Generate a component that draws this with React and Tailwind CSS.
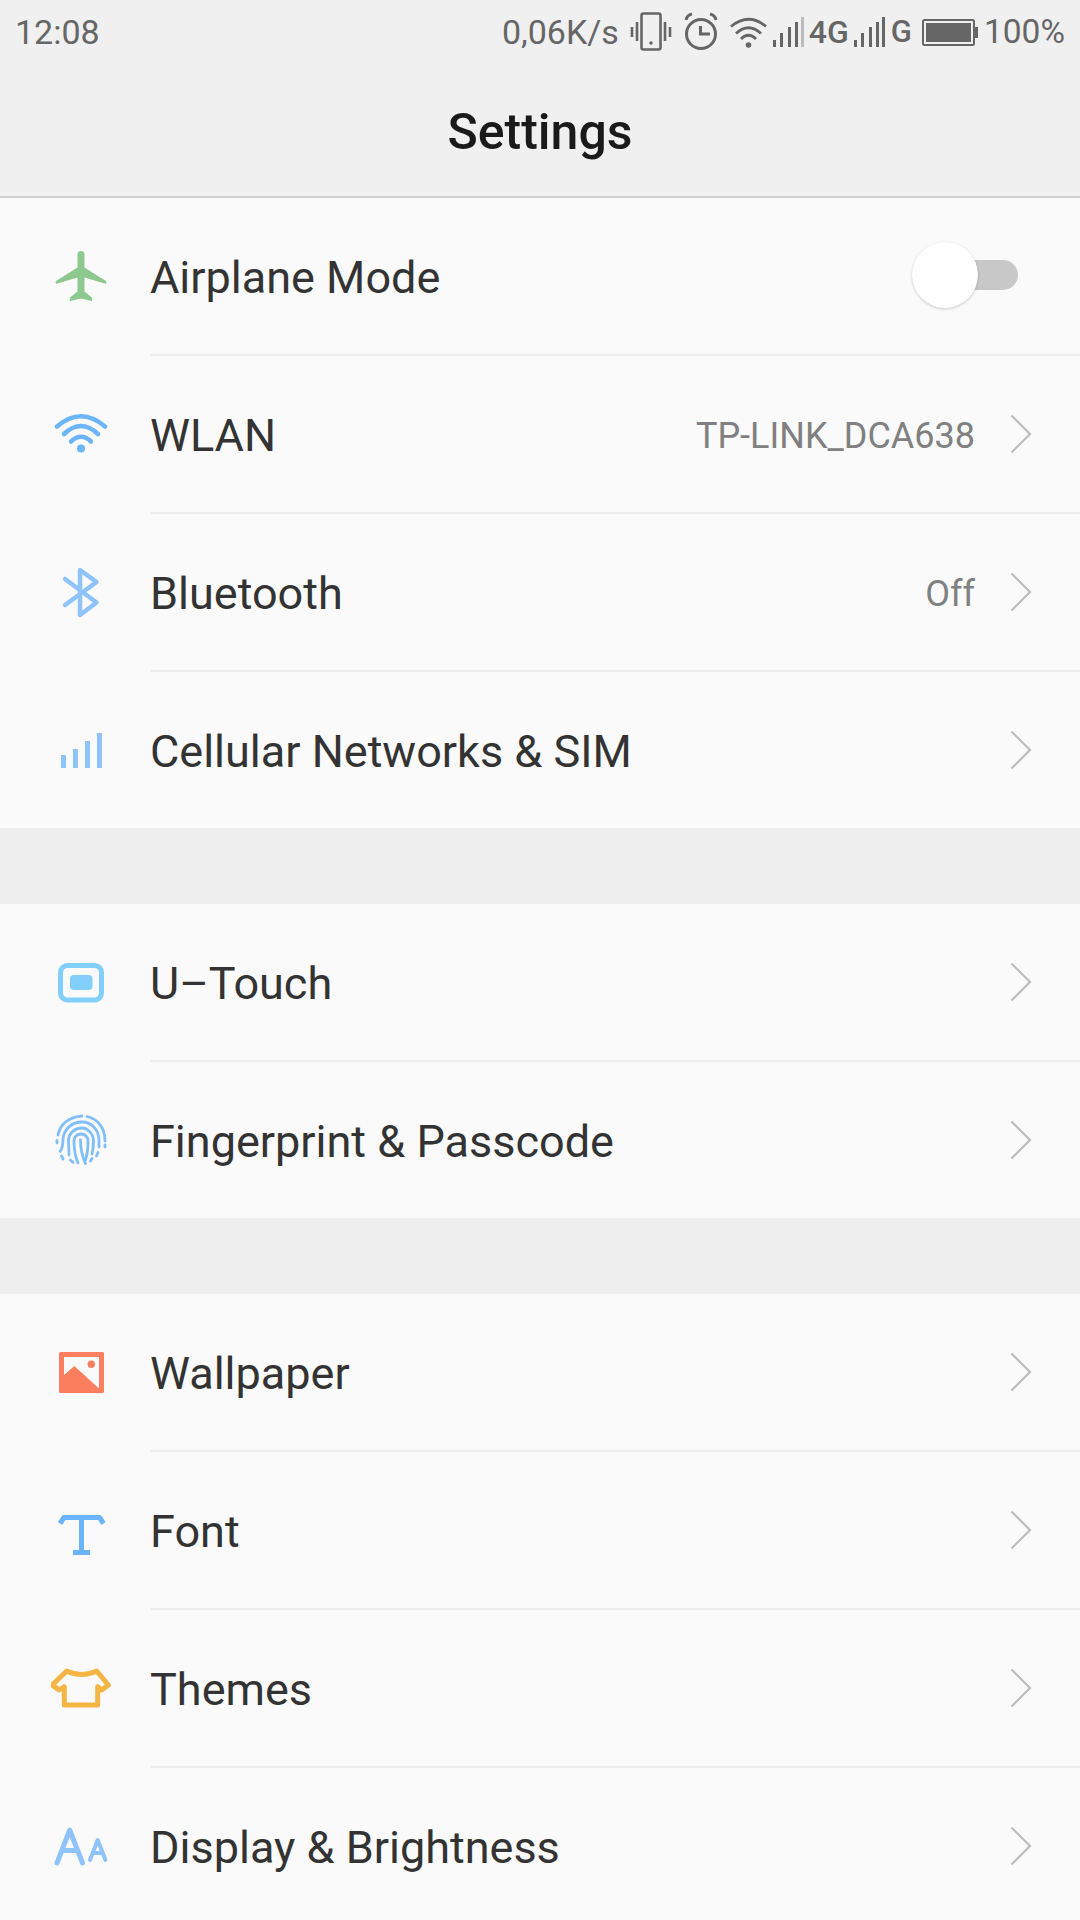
const Plane = () => (
  <svg width="60" height="60" viewBox="0 0 60 60" fill="#8dc98f">
    <path d="M26.500 7.500a3.500 3.500 0 0 1 7 0V20.500L54.500 33.800q1.200.9.8 2.200q-.5 1-1.800.6L33.500 30.500V44.500L40.800 50.500q1 2-.2 3.500L30 51.500L19.400 54q-1.200-1.500-.2-3.500L26.500 44.500V30.500L6.500 36.600q-1.300.4-1.800-.6q-.4-1.300.8-2.200L26.500 20.500Z" />
  </svg>
);

const Wifi = () => (
  <svg width="60" height="60" viewBox="0 0 60 60" fill="none" stroke="#6cb5fb" strokeWidth="4.500" strokeLinecap="round">
    <path d="M6 21.500Q30 1 54 21.500" />
    <path d="M13 29Q30 13 47 29" />
    <path d="M20 36.500Q30 27 40 36.500" />
    <circle cx="30" cy="43.500" r="4" fill="#6cb5fb" stroke="none" />
  </svg>
);

const Bluetooth = () => (
  <svg width="60" height="60" viewBox="0 0 60 60" fill="none" stroke="#8fc3fb" strokeWidth="4.500" strokeLinecap="round" strokeLinejoin="round">
    <path d="M14 16L45.500 39.500L29 52V7L45.500 19L14 42" />
  </svg>
);

const Cellular = () => (
  <svg width="60" height="60" viewBox="0 0 60 60" fill="#8ec4fb">
    <rect x="10" y="35" width="5" height="13" />
    <rect x="22" y="29" width="5" height="19" />
    <rect x="34" y="21" width="5" height="27" />
    <rect x="46" y="13" width="5" height="35" />
  </svg>
);

const UTouch = () => (
  <svg width="60" height="60" viewBox="0 0 60 60" fill="none">
    <rect x="9.500" y="12.500" width="41" height="34.500" rx="7" stroke="#81cffa" strokeWidth="5" />
    <rect x="19" y="22" width="22.500" height="15" rx="4" fill="#81cffa" />
  </svg>
);

const Fingerprint = () => (
  <svg width="60" height="60" viewBox="0 0 60 60" fill="none" stroke="#80bffa" strokeWidth="2.800" strokeLinecap="round">
    <path d="M7 25C9 14 18 7 31 6" />
    <path d="M36 6.500C47 9 54 18 54 31" />
    <path d="M6 30.500V33" />
    <path d="M54 35V37" />
    <path d="M9 41.500C12 38 12 33 12 29C13 19 21 12 31 12C41 12 48 20 48 31V37" />
    <path d="M18 45C18 39 17.500 34 17.500 30C18 23 24 18 30.500 18C37 18 42.500 24 42.500 31C42.500 35 42 40 41 44" />
    <path d="M27 53C24 46 23 38 23 31C23 27 26 24 30 24C34 24 37 27 37 31C37 37 36.500 44 34.500 50" />
    <path d="M29.500 30C29.500 38 31 46 34.500 53.500" />
    <path d="M10.500 46L12 49" />
    <path d="M19.500 50L22 52.500" />
    <path d="M41 48.500L39.500 51" />
    <path d="M47 42.500L45.500 46" />
  </svg>
);

const Wallpaper = () => (
  <svg width="60" height="60" viewBox="0 0 60 60">
    <rect x="8" y="9" width="45" height="41" rx="1.500" fill="#fb7f5e" />
    <path d="M13 14H48V45.500L23.300 23L13 32Z" fill="#fafafa" />
    <circle cx="40.300" cy="21.300" r="3.700" fill="#fb7f5e" />
  </svg>
);

const FontIcon = () => (
  <svg width="60" height="60" viewBox="0 0 60 60" fill="none" stroke="#69b4fb" strokeWidth="5">
    <path d="M9 22.500L13 16.500H48.500L52.500 22.500" strokeLinejoin="round" />
    <path d="M30.500 16.500V52" />
    <path d="M22 51.500H39" />
  </svg>
);

const Shirt = () => (
  <svg width="60" height="60" viewBox="0 0 60 60" fill="none" stroke="#f4b544" strokeWidth="5" strokeLinejoin="round">
    <path d="M15.700 12Q30.700 19 45.700 12L57.300 26L50.700 31L46.700 27.700V46H13.300V27.700L8 31L1.300 26Z" />
  </svg>
);

const TextSize = () => (
  <svg width="60" height="60" viewBox="0 0 60 60" fill="none" stroke="#8ec4fb" strokeLinecap="round" strokeLinejoin="round">
    <path d="M6 47L18.700 14L31.500 47M11 34.500H26.500" strokeWidth="5" />
    <path d="M39 44L46.700 24L54.500 44M42 37H51.500" strokeWidth="4" />
  </svg>
);

const Chevron = () => (
  <svg width="22" height="40" viewBox="0 0 22 40" fill="none" stroke="#bcbcbc" strokeWidth="2.200" className="ml-[34px] shrink-0">
    <path d="M1.500 1.500L20 20L1.500 38.500" />
  </svg>
);

const groups = [
  [
    { icon: Plane, label: 'Airplane Mode', toggle: true },
    { icon: Wifi, label: 'WLAN', value: 'TP-LINK_DCA638' },
    { icon: Bluetooth, label: 'Bluetooth', value: 'Off' },
    { icon: Cellular, label: 'Cellular Networks & SIM' },
  ],
  [
    { icon: UTouch, label: 'U–Touch' },
    { icon: Fingerprint, label: 'Fingerprint & Passcode' },
  ],
  [
    { icon: Wallpaper, label: 'Wallpaper' },
    { icon: FontIcon, label: 'Font' },
    { icon: Shirt, label: 'Themes' },
    { icon: TextSize, label: 'Display & Brightness' },
  ],
];

function Row({ item, last }) {
  const Icon = item.icon;
  return (
    <div className={`flex items-center pl-[51px] ${last ? 'h-[156px]' : 'h-[158px]'}`}>
      <div className="w-[60px] h-[60px] shrink-0">
        <Icon />
      </div>
      <div className={`ml-[40px] flex-1 h-full flex items-center justify-between pr-[48px] ${last ? '' : 'border-b-2 border-[#ececec]'}`}>
        <span className="mt-[4px] ml-[-1px] text-[45px] text-[#333333]">{item.label}</span>
        {item.toggle ? (
          <div className="relative w-[73px] h-[30px] mr-[14px] mt-[-2px] rounded-full bg-[#c8c8c8]">
            <div className="absolute left-[-33px] top-[-18px] w-[66px] h-[66px] rounded-full bg-white shadow-[0_1px_3px_rgba(0,0,0,0.2)]" />
          </div>
        ) : (
          <div className="flex items-center">
            {item.value && <span className="mt-[4px] mr-[1px] text-[36px] text-[#808080]">{item.value}</span>}
            <Chevron />
          </div>
        )}
      </div>
    </div>
  );
}

function StatusBar() {
  return (
    <div className="h-[64px] flex items-center justify-between pl-[15px] pr-[15px] text-[34px] text-[#666666]">
      <span>12:08</span>
      <div className="flex items-center">
        <span>0,06K/s</span>
        {/* vibrate */}
        <svg width="42" height="40" viewBox="0 0 42 40" fill="none" stroke="#666666" className="ml-[11px]">
          <rect x="11.500" y="1.500" width="19" height="36" rx="2" strokeWidth="2.600" />
          <circle cx="21" cy="31" r="1.800" fill="#666666" stroke="none" />
          <path d="M7 10V29M35 10V29" strokeWidth="2.600" />
          <path d="M2 15V25M40 15V25" strokeWidth="2.600" />
        </svg>
        {/* alarm */}
        <svg width="34" height="40" viewBox="0 0 34 40" fill="none" stroke="#666666" strokeWidth="3" className="ml-[12px]">
          <circle cx="17" cy="22" r="14.500" />
          <path d="M16.500 14V22H26" />
          <path d="M2 8Q3 3 8 2M32 8Q31 3 26 2" strokeWidth="3" />
        </svg>
        {/* wifi */}
        <svg width="37" height="32" viewBox="0 0 37 32" fill="none" stroke="#666666" strokeWidth="2.800" className="ml-[12px]">
          <path d="M1 10.500Q18.500 -4 36 10.500" />
          <path d="M6 17.500Q18.500 6 31 17.500" />
          <path d="M11 23Q18.500 15.500 26 23" />
          <circle cx="18.500" cy="29" r="2.800" fill="#666666" stroke="none" />
        </svg>
        {/* sim 1 */}
        <svg width="31" height="30" viewBox="0 0 31 30" fill="#666666" className="ml-[6px]">
          <rect x="0" y="23" width="3" height="7" />
          <rect x="7" y="16" width="3" height="14" />
          <rect x="15" y="10" width="3" height="20" />
          <rect x="22" y="5" width="3" height="25" />
          <rect x="28" y="0" width="3" height="30" fill="#bbbbbb" />
        </svg>
        <span className="ml-[5px] text-[32px] font-medium">4G</span>
        {/* sim 2 */}
        <svg width="31" height="30" viewBox="0 0 31 30" fill="#666666" className="ml-[5px]">
          <rect x="0" y="23" width="3" height="7" />
          <rect x="7" y="16" width="3" height="14" />
          <rect x="15" y="10" width="3" height="20" />
          <rect x="22" y="5" width="3" height="25" />
          <rect x="28" y="0" width="3" height="30" />
        </svg>
        <span className="ml-[6px] text-[31px] font-medium">G</span>
        {/* battery */}
        <svg width="56" height="27" viewBox="0 0 56 27" fill="none" className="ml-[10px]">
          <rect x="1" y="1" width="51" height="25" rx="1.500" stroke="#666666" strokeWidth="2" />
          <rect x="4" y="4" width="45" height="19" fill="#666666" />
          <rect x="53" y="8" width="3" height="11" fill="#666666" />
        </svg>
        <span className="ml-[6px] text-[33.5px]">100%</span>
      </div>
    </div>
  );
}

export default function App() {
  return (
    <div className="w-[1080px] h-[1920px] overflow-hidden bg-[#fafafa] font-[Roboto,sans-serif]">
      <div className="h-[198px] bg-[#f0f0f0] border-b-2 border-[#d0d0d0]">
        <StatusBar />
        <div className="h-[132px] flex items-center justify-center pt-[4px] text-[50px] font-medium text-[#1a1a1a]">
          Settings
        </div>
      </div>
      {groups.map((group, g) => (
        <div key={g}>
          {g > 0 && <div className="h-[76px] bg-[#eeeeee]" />}
          {group.map((item, i) => (
            <Row key={item.label} item={item} last={i === group.length - 1} />
          ))}
        </div>
      ))}
    </div>
  );
}
